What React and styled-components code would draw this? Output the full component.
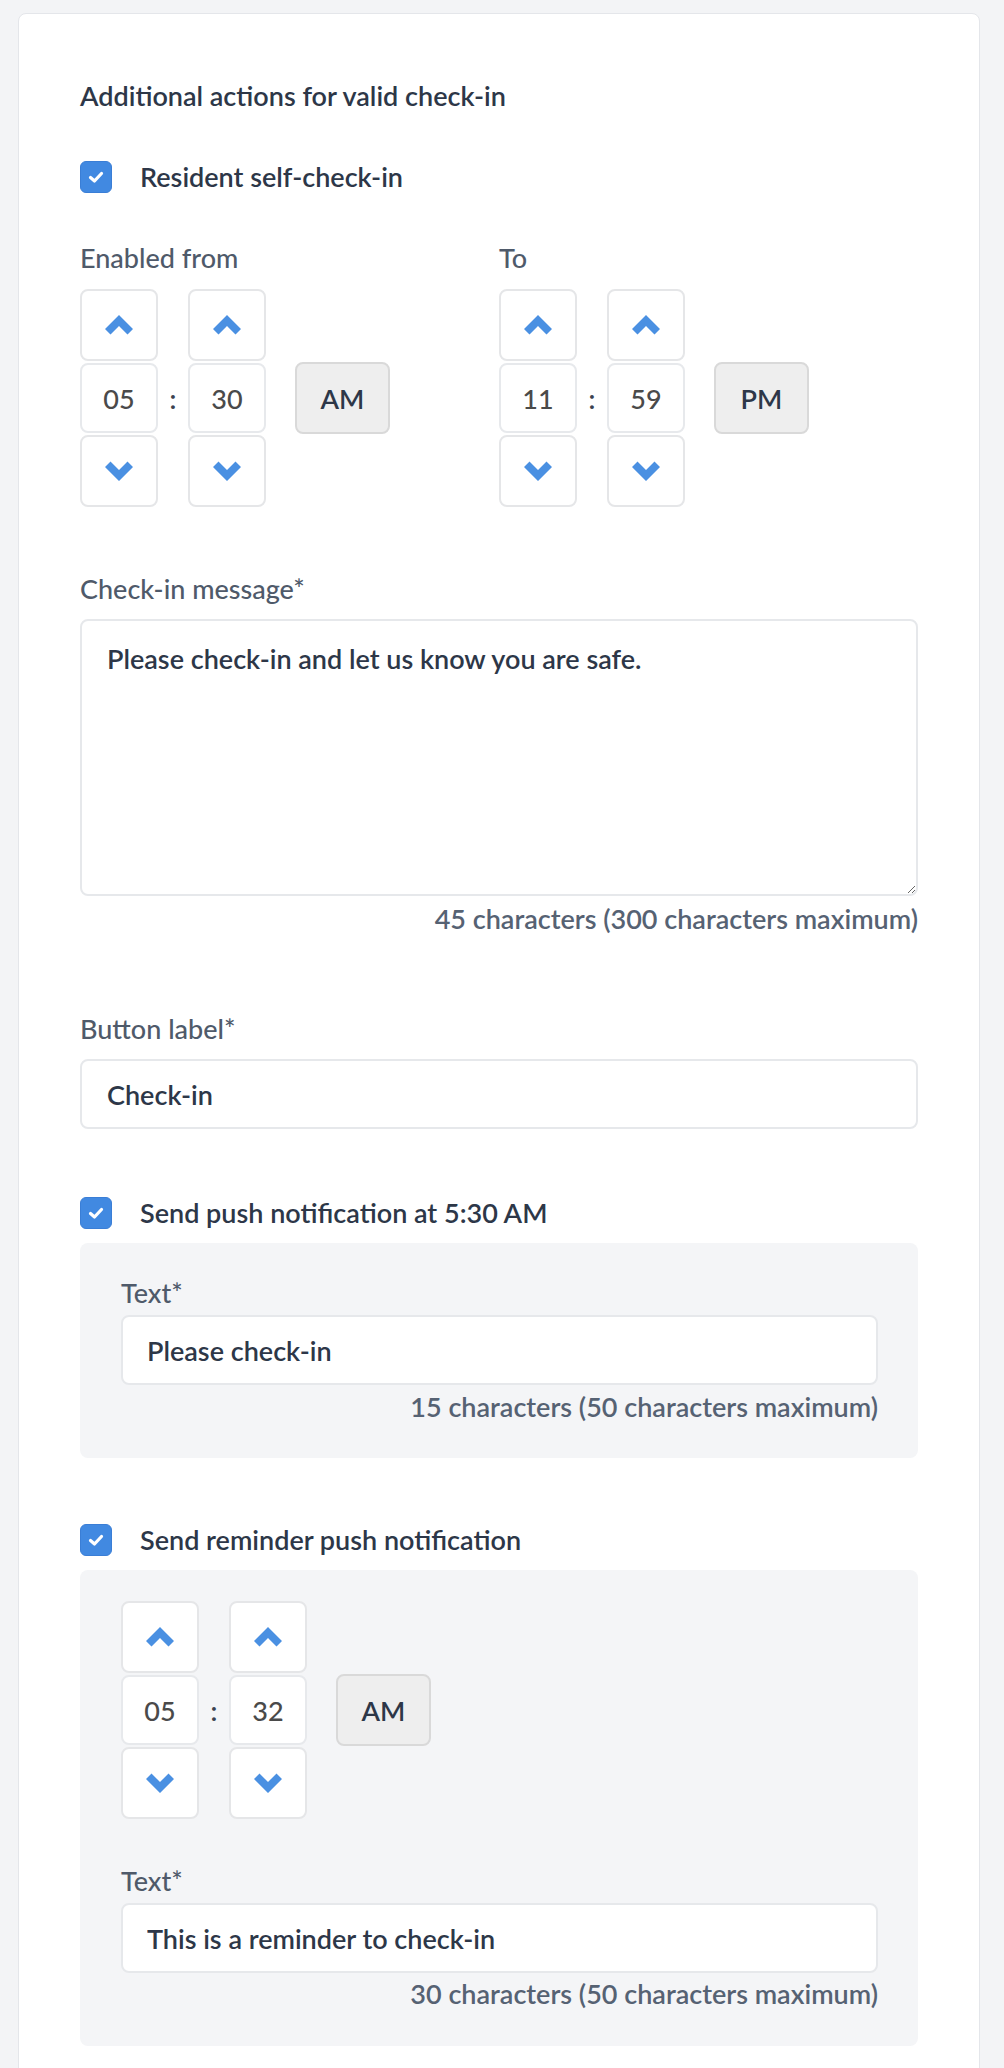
import React from "react";
import styled, { createGlobalStyle } from "styled-components";

const Global = createGlobalStyle`
  html, body { margin: 0; padding: 0; }
  body {
    background: #f3f4f6;
    font-family: Lato, "Open Sans", sans-serif;
    color: #2d3748;
    -webkit-font-smoothing: antialiased;
  }
  * { box-sizing: border-box; }
`;

const Page = styled.div`
  padding: 13px 24px 0 18px;
`;

const Card = styled.div`
  background: #ffffff;
  border: 1px solid #e4e6ea;
  border-radius: 8px;
  padding: 64px 61px 80px 61px;
  display: flex;
  flex-direction: column;
`;

const Title = styled.h2`
  margin: 0;
  font-size: 27px;
  line-height: 36px;
  font-weight: 600;
  color: #2d3748;
`;

const CheckRow = styled.label`
  display: flex;
  align-items: center;
  gap: 28px;
  height: 36px;
  margin-top: ${(p) => p.$mt}px;
  font-size: 27px;
  line-height: 36px;
  font-weight: 600;
  color: #2d3748;
`;

const Box = styled.span`
  width: 32px;
  height: 32px;
  border-radius: 6px;
  background: #4189e1;
  border: 1px solid #3a7ed6;
  display: flex;
  align-items: center;
  justify-content: center;
  flex: none;
`;

const TimeGrid = styled.div`
  display: grid;
  grid-template-columns: 1fr 1fr;
  margin-top: 45px;
`;

const Label = styled.div`
  font-size: 27px;
  line-height: 36px;
  font-weight: 500;
  color: #4f5a6a;
`;

const Picker = styled.div`
  display: flex;
  align-items: center;
  margin-top: ${(p) => p.$mt}px;
`;

const Column = styled.div`
  display: flex;
  flex-direction: column;
  gap: 2px;
  width: 78px;
`;

const Step = styled.button`
  width: 78px;
  height: 72px;
  background: #ffffff;
  border: 2px solid #e5e6e8;
  border-radius: 8px;
  padding: 0;
  display: flex;
  align-items: center;
  justify-content: center;
  cursor: pointer;
`;

const Num = styled.div`
  width: 78px;
  height: 70px;
  background: #ffffff;
  border: 2px solid #e7e9ec;
  border-radius: 8px;
  display: flex;
  align-items: center;
  justify-content: center;
  font-size: 27px;
  font-weight: 500;
  color: #4a4a4a;
`;

const Colon = styled.div`
  width: 30px;
  text-align: center;
  font-size: 27px;
  font-weight: 600;
  color: #3b4250;
`;

const Meridiem = styled.button`
  margin-left: 29px;
  width: 95px;
  height: 72px;
  background: #eeeeee;
  border: 2px solid #d9d9d9;
  border-radius: 8px;
  font-family: inherit;
  font-size: 27px;
  font-weight: 600;
  color: #2d3748;
  padding: 0;
`;

const Field = styled.div`
  display: flex;
  flex-direction: column;
  margin-top: ${(p) => p.$mt}px;
`;

const Control = styled.div`
  margin-top: ${(p) => p.$gap}px;
  display: flex;
  flex-direction: column;
`;

const TextArea = styled.textarea`
  width: 100%;
  height: 277px;
  border: 2px solid #e6e8eb;
  border-radius: 8px;
  padding: 20px 25px;
  font-family: inherit;
  font-size: 27px;
  line-height: 36px;
  font-weight: 600;
  color: #2d3748;
  background: #fff;
  outline: none;
  display: block;
`;

const Input = styled.input`
  width: 100%;
  height: 70px;
  border: 2px solid #e6e8eb;
  border-radius: 8px;
  padding: 0 ${(p) => p.$pl}px;
  font-family: inherit;
  font-size: 27px;
  line-height: 36px;
  font-weight: 600;
  color: #2d3748;
  background: #fff;
  outline: none;
  display: block;
`;

const Counter = styled.div`
  margin-top: ${(p) => p.$mt}px;
  text-align: right;
  font-size: 27px;
  line-height: 36px;
  font-weight: 600;
  color: #566273;
`;

const Panel = styled.div`
  margin-top: 12px;
  background: #f4f5f7;
  border-radius: 8px;
  padding: ${(p) => p.$pt}px 40px ${(p) => p.$pb}px 41px;
  display: flex;
  flex-direction: column;
`;

const Chevron = ({ down }) => (
  <svg width="28" height="20" viewBox="0 0 28 20" aria-hidden="true">
    <polygon
      fill="#4a90e2"
      points={
        down
          ? "14,20 28,6 22.5,0.5 14,9 5.5,0.5 0,6"
          : "14,0 28,14 22.5,19.5 14,11 5.5,19.5 0,14"
      }
    />
  </svg>
);

const Check = () => (
  <svg width="20" height="20" viewBox="0 0 20 20" aria-hidden="true">
    <polyline
      points="4.5,10.5 8.5,14 15.5,6.5"
      fill="none"
      stroke="#ffffff"
      strokeWidth="3.2"
      strokeLinecap="round"
      strokeLinejoin="round"
    />
  </svg>
);

const Checkbox = ({ label, mt }) => (
  <CheckRow $mt={mt}>
    <Box>
      <Check />
    </Box>
    {label}
  </CheckRow>
);

const Spinner = ({ value }) => (
  <Column>
    <Step aria-label="increase">
      <Chevron />
    </Step>
    <Num>{value}</Num>
    <Step aria-label="decrease">
      <Chevron down />
    </Step>
  </Column>
);

const TimePicker = ({ h, m, period, mt = 0 }) => (
  <Picker $mt={mt}>
    <Spinner value={h} />
    <Colon>:</Colon>
    <Spinner value={m} />
    <Meridiem>{period}</Meridiem>
  </Picker>
);

export default function App() {
  return (
    <>
      <Global />
      <Page>
        <Card>
          <Title>Additional actions for valid check-in</Title>
          <Checkbox label="Resident self-check-in" mt={45} />

          <TimeGrid>
            <div>
              <Label>Enabled from</Label>
              <TimePicker h="05" m="30" period="AM" mt={13} />
            </div>
            <div>
              <Label>To</Label>
              <TimePicker h="11" m="59" period="PM" mt={13} />
            </div>
          </TimeGrid>

          <Field $mt={64}>
            <Label>Check-in message*</Label>
            <Control $gap={12}>
              <TextArea
                readOnly
                value="Please check-in and let us know you are safe."
              />
            </Control>
            <Counter $mt={5}>45 characters (300 characters maximum)</Counter>
          </Field>

          <Field $mt={74}>
            <Label>Button label*</Label>
            <Control $gap={12}>
              <Input readOnly value="Check-in" $pl={25} />
            </Control>
          </Field>

          <Checkbox label="Send push notification at 5:30 AM" mt={66} />
          <Panel $pt={32} $pb={33}>
            <Label>Text*</Label>
            <Control $gap={4}>
              <Input readOnly value="Please check-in" $pl={24} />
            </Control>
            <Counter $mt={4}>15 characters (50 characters maximum)</Counter>
          </Panel>

          <Checkbox label="Send reminder push notification" mt={64} />
          <Panel $pt={31} $pb={34}>
            <TimePicker h="05" m="32" period="AM" />
            <Field $mt={44}>
              <Label>Text*</Label>
              <Control $gap={4}>
                <Input
                  readOnly
                  value="This is a reminder to check-in"
                  $pl={24}
                />
              </Control>
              <Counter $mt={3}>30 characters (50 characters maximum)</Counter>
            </Field>
          </Panel>
        </Card>
      </Page>
    </>
  );
}
